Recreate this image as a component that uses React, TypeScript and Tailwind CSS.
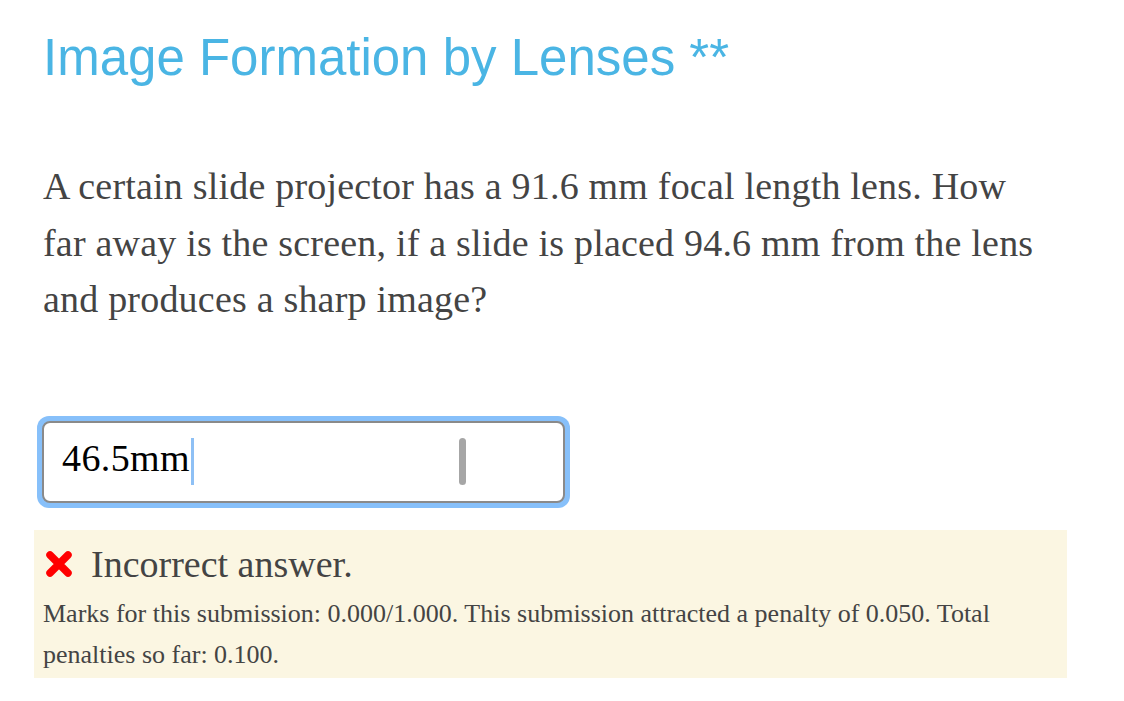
import React from "react";

export default function App() {
  return (
    <div className="min-h-[701px] w-[1124px] bg-white text-[#444]">
      <div className="pl-[43px] pr-[70px] pt-[23px]">
        <h1 className="text-[51px] leading-[70px] text-[#4ab5e4] font-['Liberation_Sans',Arial,sans-serif]">
          Image Formation by Lenses <span>**</span>
        </h1>
        <p className="mt-[65px] text-[38px] leading-[56.5px] tracking-[0.2px] text-[#444] font-['Liberation_Serif','Times_New_Roman',serif]">
          A certain slide projector has a 91.6 mm focal length lens. How far away is the screen, if a slide is placed 94.6 mm from the lens and produces a sharp image?
        </p>
      </div>
      <div className="ml-[37px] mt-[88px] w-[533px] rounded-[12px] bg-[#87c0fa] p-[5px]">
        <div className="flex h-[82px] items-center rounded-[8px] border-2 border-[#8a8a8a] bg-white pb-[6px] pl-[18px]">
          <span className="text-[38px] tracking-[0.4px] text-black font-['Liberation_Serif','Times_New_Roman',serif]">46.5mm</span>
          <span className="ml-[1px] mt-[6px] h-[47px] w-[3px] bg-[#8ec0f5]"></span>
          <span className="ml-[265px] mt-[6px] h-[47px] w-[7px] rounded-full bg-[#a6a6a6]"></span>
        </div>
      </div>
      <div className="ml-[34px] mt-[22px] w-[1033px] bg-[#fbf6e2] px-[9px] pb-[3px] pt-[12px] font-['Liberation_Serif','Times_New_Roman',serif]">
        <div className="flex items-center">
          <svg width="30" height="30" viewBox="0 0 30 30" className="ml-[1px]">
            <path d="M6 6 L24 24 M24 6 L6 24" stroke="#ff0000" strokeWidth="7.5" strokeLinecap="round" />
          </svg>
          <span className="ml-[17px] text-[38px] leading-[44px] text-[#444]">Incorrect answer.</span>
        </div>
        <p className="mt-[7px] text-[26px] leading-[41px] text-[#444]">
          Marks for this submission: 0.000/1.000. This submission attracted a penalty of 0.050. Total penalties so far: 0.100.
        </p>
      </div>
    </div>
  );
}
